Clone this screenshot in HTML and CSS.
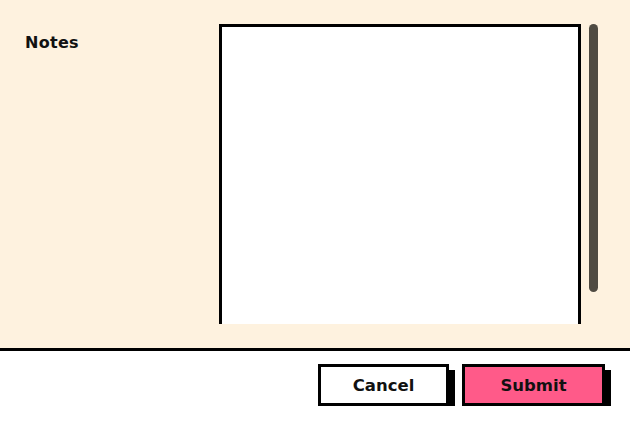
FILE: index.html
```html
<!DOCTYPE html>
<html>
<head>
<meta charset="utf-8">
<link rel="stylesheet" href="styles.css">
</head>
<body>
<div class="panel">
  <div class="scroll">
    <label class="label" for="notes">Notes</label>
    <textarea id="notes" class="notes"></textarea>
  </div>
  <div class="thumb"></div>
</div>
<div class="footer">
  <button class="btn btn-cancel">Cancel</button>
  <button class="btn btn-submit">Submit</button>
</div>
</body>
</html>
```
FILE: styles.css
```css
html, body {
  margin: 0;
  padding: 0;
  background: #ffffff;
  font-family: "DejaVu Sans", "Liberation Sans", Arial, sans-serif;
}
.panel {
  display: flex;
  align-items: flex-start;
  height: 351px;
  box-sizing: border-box;
  padding: 24px 32px 0 25px;
  background: #fef2df;
  border-bottom: 3px solid #000;
}
.scroll {
  flex: 1;
  height: 300px;
  overflow: hidden;
  display: grid;
  grid-template-columns: 194px 1fr;
  align-items: start;
}
.label {
  padding-top: 9px;
  font-size: 16px;
  font-weight: 700;
  letter-spacing: 0.3px;
  color: #111;
}
.notes {
  display: block;
  width: 362px;
  height: 420px;
  box-sizing: border-box;
  margin: 0;
  border: 3px solid #000;
  border-radius: 0;
  background: #fff;
  resize: none;
  outline: none;
}
.thumb {
  width: 9px;
  height: 268px;
  margin-left: 8px;
  border-radius: 5px;
  background: #4f4b42;
}
.footer {
  display: flex;
  justify-content: flex-end;
  gap: 13px;
  padding: 13px 25px 0 0;
}
.btn {
  height: 42px;
  box-sizing: border-box;
  border: 3px solid #000;
  border-radius: 0;
  box-shadow: 6px 6px 0 #000;
  font-family: "DejaVu Sans", "Liberation Sans", Arial, sans-serif;
  font-size: 16.5px;
  font-weight: 700;
  color: #111;
  padding: 0;
}
.btn-cancel {
  width: 131px;
  background: #fff;
}
.btn-submit {
  width: 143px;
  background: #ff5a89;
}
```
